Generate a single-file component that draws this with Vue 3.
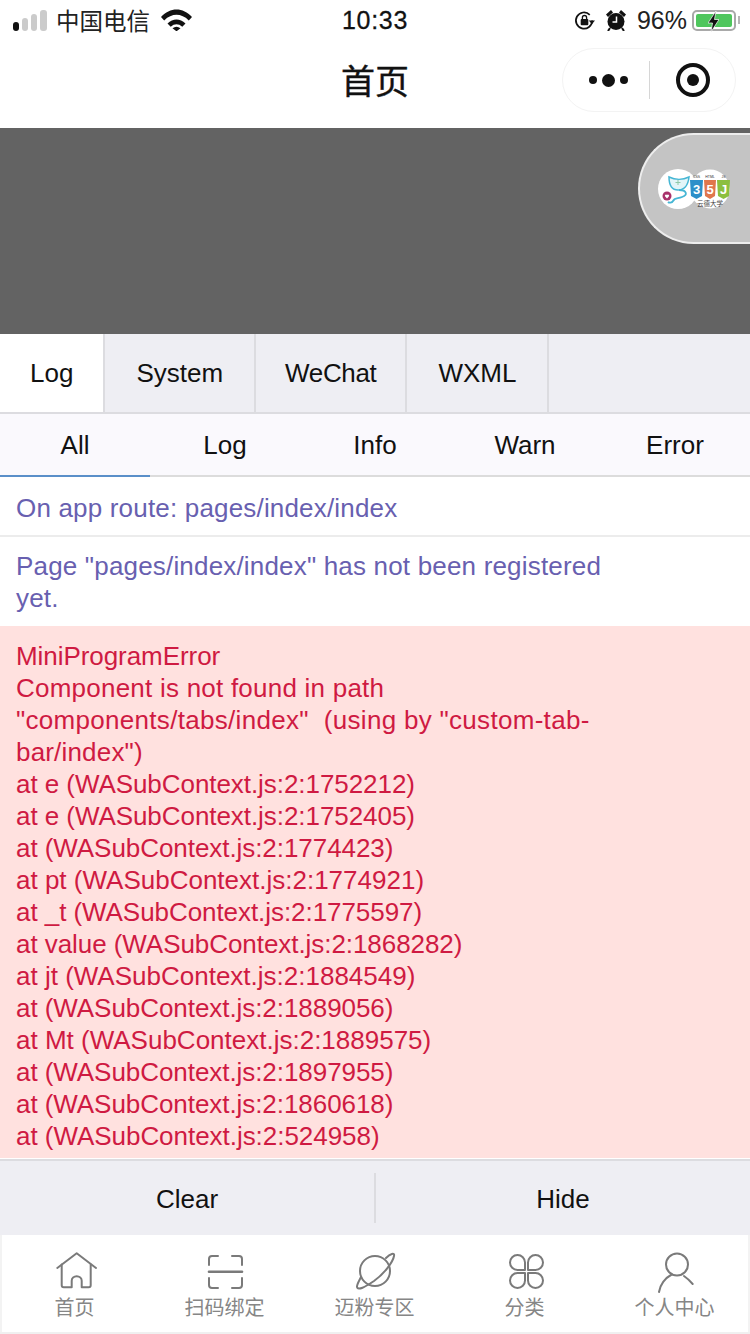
<script setup>
const tabs = [
  { label: 'Log', track: 0 },
  { label: 'System', track: 0 },
  { label: 'WeChat', track: -0.35 },
  { label: 'WXML', track: 0 },
]
const filters = ['All', 'Log', 'Info', 'Warn', 'Error']
const errorLines = [
  { text: 'MiniProgramError', track: -0.06 },
  { text: 'Component is not found in path', track: 0.23 },
  { text: '"components/tabs/index"  (using by "custom-tab-', track: 0.3 },
  { text: 'bar/index")', track: 0.18 },
  { text: 'at e (WASubContext.js:2:1752212)', track: -0.06 },
  { text: 'at e (WASubContext.js:2:1752405)', track: -0.06 },
  { text: 'at (WASubContext.js:2:1774423)', track: -0.06 },
  { text: 'at pt (WASubContext.js:2:1774921)', track: 0 },
  { text: 'at _t (WASubContext.js:2:1775597)', track: -0.06 },
  { text: 'at value (WASubContext.js:2:1868282)', track: -0.06 },
  { text: 'at jt (WASubContext.js:2:1884549)', track: 0 },
  { text: 'at (WASubContext.js:2:1889056)', track: -0.06 },
  { text: 'at Mt (WASubContext.js:2:1889575)', track: 0 },
  { text: 'at (WASubContext.js:2:1897955)', track: -0.06 },
  { text: 'at (WASubContext.js:2:1860618)', track: -0.06 },
  { text: 'at (WASubContext.js:2:524958)', track: -0.04 },
]
const nav = ['首页', '扫码绑定', '迈粉专区', '分类', '个人中心']
</script>

<template>
  <div class="page">
    <header class="status">
      <div class="status-left">
        <span class="signal"><i></i><i></i><i></i><i></i></span>
        <span class="carrier">中国电信</span>
        <svg class="wifi" viewBox="0 0 31 22"><path d="M0 8C9-2 22-2 31 8l-3.200 3.400C20 4 11 4 3.200 11.400z M6.500 14.500c5.500-5.500 12.500-5.500 18 0l-3.200 3.300c-3.800-3.300-7.800-3.300-11.600 0z M11.500 19.300c2.700-2 5.300-2 8 0l-4 3z" fill="#111"/></svg>
      </div>
      <div class="time">10:33</div>
      <div class="status-right">
        <svg class="lock" viewBox="0 0 22 22"><path d="M19 11a8.500 8.500 0 1 1-2.500-6" fill="none" stroke="#111" stroke-width="1.800"/><path d="M15.500 11H22l-3.200 4z" fill="#111"/><rect x="7" y="9.500" width="8" height="6.500" rx="1" fill="#111"/><path d="M8.800 10V8a2.200 2.200 0 0 1 4.400 0v2" fill="none" stroke="#111" stroke-width="1.400"/></svg>
        <svg class="alarm" viewBox="0 0 20 22"><circle cx="10" cy="12.500" r="8.500" fill="#111"/><path d="M0 5.500L5 1l2 2.500-5 4.500zM20 5.500L15 1l-2 2.500 5 4.500z" fill="#111"/><path d="M10.500 7.500v5.500H6.500" fill="none" stroke="#fff" stroke-width="1.500"/><path d="M4 19l-2 3M16 19l2 3" stroke="#111" stroke-width="2"/></svg>
        <span class="pct">96%</span>
        <span class="battery"><span class="fill"></span><svg class="bolt" viewBox="0 0 11 21"><path d="M8 0L0 12h4.500L3 21l8-12.500H6.500z" fill="#111" stroke="#fff" stroke-width=".7"/></svg></span>
        <span class="nub"></span>
      </div>
    </header>

    <div class="titlebar">
      <h1 class="title">首页</h1>
      <div class="capsule">
        <div class="dots"><i></i><i class="big"></i><i></i></div>
        <span class="capsule-sep"></span>
        <div class="target"><i></i></div>
      </div>
    </div>

    <div class="banner">
      <div class="float-card">
        <div class="logo logo-a">
          <svg viewBox="0 0 40 40"><circle cx="20" cy="20" r="20" fill="#fff"/><path d="M11 8c0 9 3 13 9 13s10-4 11-13c-6 3-14 3-20 0z" fill="#e3f5f8" stroke="#45b6d4" stroke-width="1.500"/><path d="M20 16v-5M17.500 13.500h5" stroke="#8fc9a8" stroke-width="1"/><path d="M21 21c8 0 9 5 3 7-4 2-7 0-9 4-1 2-4 2-5 1" fill="none" stroke="#45b6d4" stroke-width="1.800"/><circle cx="9" cy="27" r="4.500" fill="#a8326b"/><path d="M9 29.500l-2-2.200a1.200 1.200 0 0 1 2-1.300 1.200 1.200 0 0 1 2 1.300z" fill="#fff"/></svg>
        </div>
        <div class="logo logo-b">
          <svg viewBox="0 0 40 40"><circle cx="20" cy="20" r="19.500" fill="#fff"/><path d="M0 11h13l-1 16-5.500 3L1 27z" fill="#2d8fc9"/><path d="M14 11h12l-1 16-5 3-5-3z" fill="#e0764c"/><path d="M27 11h13l-1 16-5.500 3-5.500-3z" fill="#8cbf3f"/><text class="shield" x="6.500" y="25" text-anchor="middle">3</text><text class="shield" x="20" y="25" text-anchor="middle">5</text><text class="shield" x="33.500" y="25" text-anchor="middle">J</text><text class="tiny" x="6.500" y="9" text-anchor="middle">CSS</text><text class="tiny" x="20" y="9" text-anchor="middle">HTML</text><text class="tiny" x="33.500" y="9" text-anchor="middle">JS</text><text class="school" x="20" y="37" text-anchor="middle">云德大学</text></svg>
        </div>
      </div>
    </div>

    <nav class="vtabs">
      <div v-for="(t, i) in tabs" :key="t.label" class="vtab" :class="{ active: i === 0 }" :style="{ letterSpacing: t.track + 'px' }">{{ t.label }}</div>
      <div class="vtab-rest"></div>
    </nav>

    <div class="filters">
      <div v-for="(f, i) in filters" :key="i" class="filter" :class="{ active: i === 0 }">{{ f }}</div>
    </div>

    <section class="logs">
      <div class="log-row info first">On app route: pages/index/index</div>
      <div class="log-row info two">Page "pages/index/index" has not been registered<br>yet.</div>
      <div class="log-row error">
        <div v-for="(line, i) in errorLines" :key="i" class="error-line" :style="{ letterSpacing: line.track + 'px' }">{{ line.text }}</div>
      </div>
    </section>

    <div class="actions">
      <div class="action"><span>Clear</span></div>
      <div class="action"><span>Hide</span></div>
    </div>

    <footer class="tabbar">
      <div v-for="(label, i) in nav" :key="label" class="nav-item">
        <svg class="nav-icon" viewBox="0 0 44 44" fill="none" stroke="#7a7a7a" stroke-width="2" stroke-linecap="round" stroke-linejoin="round">
          <g v-if="i === 0"><path d="M4.300 18L23.700 3.300 43 18"/><path d="M8.700 14.500V35.300a2 2 0 0 0 2 2H18.700V30.700a5 4.500 0 0 1 10 0V37.300H35.700a2 2 0 0 0 2-2V14.500"/></g>
          <g v-else-if="i === 1"><path d="M15 6H9a3 3 0 0 0-3 3v6M29 6h7a3 3 0 0 1 3 3v6M15 38H9a3 3 0 0 1-3-3v-7M29 38h7a3 3 0 0 0 3-3v-7"/><path d="M6 21.700h33" stroke-width="2.600"/></g>
          <g v-else-if="i === 2"><circle cx="22" cy="21" r="15"/><path d="M33 8C37 4 42 2 41 6 40 12 31 24 21 31 12 37 5 41 4 37 3.500 35 6 31 8 27"/></g>
          <g v-else-if="i === 3"><path d="M22 20h-7.500a7.500 7.500 0 1 1 7.500-7.500zM25 20h7.500a7.500 7.500 0 1 0-7.500-7.500zM22 23h-7.500a7.500 7.500 0 1 0 7.500 7.500zM25 23h7.500a7.500 7.500 0 1 1-7.500 7.500z"/></g>
          <g v-else><circle cx="24" cy="14.500" r="11"/><path d="M6 42C7 35 12 28 18.700 24.500M39.700 34C37 31 34 28 31 26"/></g>
        </svg>
        <span class="nav-label">{{ label }}</span>
      </div>
    </footer>
  </div>
</template>

<style>
body { margin: 0; background: #fff; }
</style>

<style scoped>
.page {
  width: 750px;
  height: 1334px;
  overflow: hidden;
  display: flex;
  flex-direction: column;
  background: #fff;
  font-family: "Liberation Sans", "Noto Sans CJK SC", sans-serif;
  color: #111;
}
.status {
  height: 40px;
  flex: none;
  display: grid;
  grid-template-columns: 1fr auto 1fr;
  align-items: center;
  padding: 0 10px 0 13px;
}
.status-left, .status-right { display: flex; align-items: center; }
.status-right { justify-content: flex-end; }
.signal { display: flex; align-items: flex-end; gap: 3px; height: 21px; }
.signal i { width: 6px; background: #cbcbcb; border-radius: 3px; }
.signal i:nth-child(1) { height: 9px; background: #111; }
.signal i:nth-child(2) { height: 13px; }
.signal i:nth-child(3) { height: 17px; }
.signal i:nth-child(4) { height: 21px; width: 7px; }
.carrier { font-size: 23.500px; margin-left: 9px; color: #222; }
.wifi { width: 31px; height: 22px; margin-left: 11px; }
.time { font-size: 25px; letter-spacing: .7px; color: #111; padding-top: 1px; margin-left: -3px; -webkit-text-stroke: .3px #111; }
.lock { width: 21px; height: 21px; }
.alarm { width: 20px; height: 22px; margin-left: 11px; }
.pct { font-size: 25px; margin-left: 11px; color: #222; }
.battery {
  position: relative;
  width: 44px;
  height: 21px;
  margin-left: 5px;
  box-sizing: border-box;
  border: 2px solid #a9a9a9;
  border-radius: 5px;
  padding: 2px;
  display: flex;
}
.fill { flex: 1; background: #4fc65d; border-radius: 2px; }
.bolt { position: absolute; left: 14px; top: -1px; width: 11px; height: 21px; }
.nub { width: 2px; height: 8px; background: #b5b5b5; margin-left: 2px; }

.titlebar {
  position: relative;
  height: 88px;
  flex: none;
  box-sizing: border-box;
  padding-bottom: 10px;
  display: flex;
  align-items: center;
  justify-content: center;
}
.title { margin: 0; font-size: 34px; font-weight: 400; color: #111; -webkit-text-stroke: .4px #111; }
.capsule {
  position: absolute;
  right: 14px;
  top: 8px;
  width: 174px;
  height: 64px;
  box-sizing: border-box;
  border: 1px solid #f3f3f3;
  border-radius: 32px;
  display: flex;
  align-items: center;
  background: #fff;
}
.dots { box-sizing: border-box; width: 86px; padding-left: 4px; display: flex; align-items: center; justify-content: center; gap: 5px; }
.dots i { width: 8px; height: 8px; border-radius: 50%; background: #111; }
.dots i.big { width: 13px; height: 13px; }
.capsule-sep { width: 1px; height: 38px; background: #d6d6d6; }
.target { flex: 1; display: flex; justify-content: center; }
.target i {
  width: 34px; height: 34px; box-sizing: border-box;
  border: 4px solid #111; border-radius: 50%;
  display: flex; align-items: center; justify-content: center;
}
.target i::after { content: ""; width: 12px; height: 12px; background: #111; border-radius: 50%; }

.banner {
  position: relative;
  height: 206px;
  flex: none;
  background: #636363;
}
.float-card {
  position: absolute;
  right: 0;
  top: 5px;
  width: 112px;
  height: 111px;
  box-sizing: border-box;
  background: #c4c4c4;
  border: 2px solid #ededed;
  border-right: 0;
  border-radius: 56px 0 0 56px;
  display: flex;
  align-items: center;
  padding-left: 18px;
}
.logo { width: 40px; height: 40px; flex: none; position: relative; }
.logo svg { display: block; width: 40px; height: 40px; overflow: visible; }
.logo-b { margin-left: -8px; }
.shield { font-size: 13px; font-weight: 700; fill: #fff; font-family: "Liberation Sans", sans-serif; }
.tiny { font-size: 3.500px; fill: #333; font-family: "Liberation Sans", sans-serif; }
.school { font-size: 6.500px; fill: #444; font-family: "Noto Sans CJK SC", sans-serif; }

.vtabs {
  height: 80px;
  flex: none;
  display: flex;
  box-sizing: border-box;
  background: #eeeef3;
  border-bottom: 2px solid #dcdce0;
  font-size: 26px;
}
.vtab {
  display: flex;
  align-items: center;
  justify-content: center;
  padding: 0 31px;
  border-right: 2px solid #dcdce0;
  color: #111;
}
.vtab.active { background: #fff; padding: 0 30px 0 30px; }
.vtab:nth-child(3) { padding: 0 29px; }
.vtab-rest { flex: 1; }

.filters {
  height: 63px;
  flex: none;
  display: flex;
  box-sizing: border-box;
  background: #faf9fd;
  border-bottom: 2px solid #dcdcdc;
  font-size: 26px;
}
.filter {
  flex: 1;
  display: flex;
  align-items: center;
  justify-content: center;
  box-sizing: border-box;
  padding-top: 2px;
  margin-bottom: -2px;
  border-bottom: 2px solid transparent;
  color: #111;
}
.filter.active { border-bottom-color: #5a8fc9; }

.logs { flex: 1; min-height: 0; font-size: 26px; line-height: 32px; overflow: hidden; padding-top: 2px; }
.log-row { padding: 0 16px; box-sizing: border-box; }
.log-row.info {
  color: #6860b0;
  letter-spacing: .18px;
  height: 58px;
  display: flex;
  align-items: center;
  border-bottom: 2px solid #ececec;
}
.log-row.info.first { padding-top: 2px; }
.log-row.info.two { display: block; height: 89px; padding-top: 13px; border-bottom: 0; }
.log-row.error {
  background: #ffe1df;
  color: #cf1a42;
  height: 532px;
  padding-top: 14px;
}
.error-line { white-space: pre; }

.actions {
  height: 76px;
  flex: none;
  display: flex;
  align-items: center;
  background: #eeeef3;
  border-top: 2px solid #dcdce0;
  box-sizing: border-box;
  font-size: 26px;
}
.action { flex: 1; height: 50px; display: flex; align-items: center; justify-content: center; color: #111; }
.action span { margin-top: 2px; }
.action:first-child { border-right: 2px solid #dcdce0; }

.tabbar {
  height: 99px;
  flex: none;
  display: flex;
  box-sizing: border-box;
  background: #fff;
  border-bottom: 2px solid #f0f0f0;
  box-shadow: inset 2px 0 0 #f3f3f3, inset -2px 0 0 #f3f3f3;
}
.nav-item {
  flex: 1;
  display: flex;
  flex-direction: column;
  align-items: center;
  padding-top: 15px;
}
.nav-icon { width: 44px; height: 44px; display: block; }
.nav-label { font-size: 20px; line-height: 24px; margin-top: 2px; margin-right: 1px; color: #868686; }
</style>
